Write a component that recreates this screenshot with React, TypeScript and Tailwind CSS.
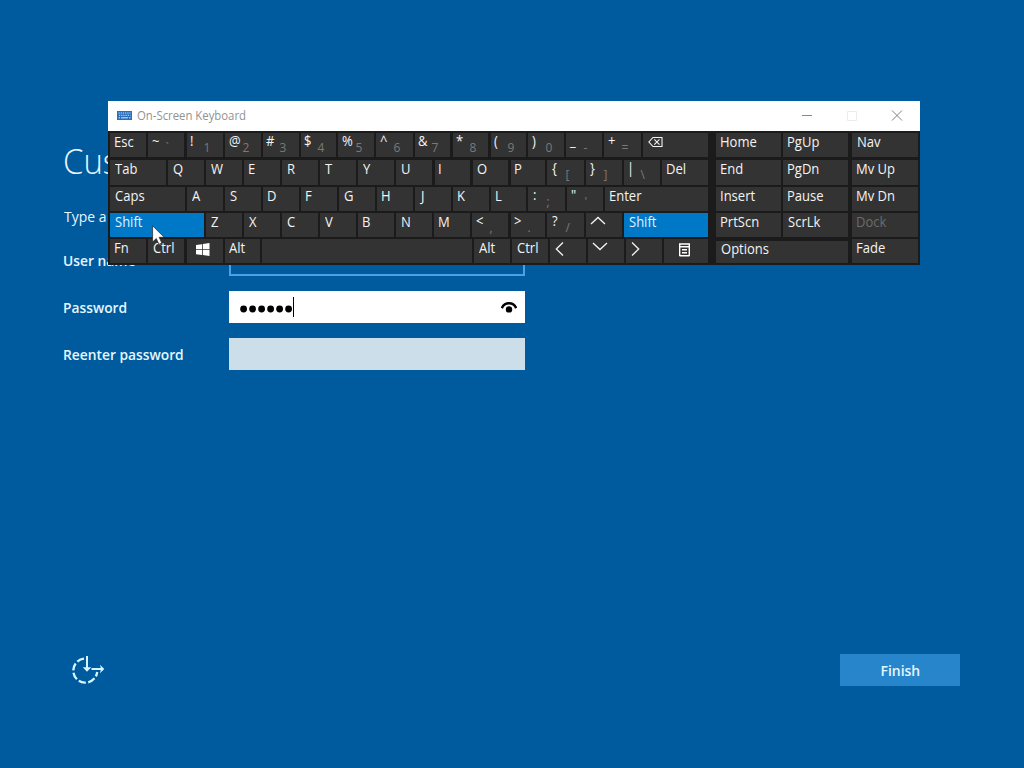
import type { ReactNode } from "react";

type Key = {
  x: number;
  end: number;
  label?: ReactNode;
  sub?: string;
  pad?: number;
  tone?: "on" | "off";
  short?: boolean;
};

const Chevron = ({ d, cls }: { d: string; cls: string }) => (
  <svg className={cls} width="16" height="16" viewBox="0 0 16 16" fill="none" stroke="#f4f4f4" strokeWidth="1.3">
    <path d={d} />
  </svg>
);

const Backspace = () => (
  <svg className="mt-[3px]" width="15" height="12" viewBox="0 0 15 12" fill="none" stroke="#f4f4f4" strokeWidth="1.1">
    <path d="M5 1.5H14V10.5H5L0.9 6Z M6.3 3.4L11.5 8.6M11.5 3.4L6.3 8.6" />
  </svg>
);

const WinLogo = () => (
  <svg className="mt-[4px]" width="14" height="13" viewBox="0 0 14 13" fill="#fff">
    <path d="M0 2L6 1.2V6.2H0Z M6.8 1L13.5 0V6.2H6.8Z M0 7H6V12L0 11.2Z M6.8 7H13.5V13L6.8 12.1Z" />
  </svg>
);

const MenuIcon = () => (
  <svg className="mt-[4px]" width="11" height="14" viewBox="0 0 11 14" fill="none" stroke="#fff">
    <path d="M0 1H11M0 3.7H11M0.7 0.5V13M10.3 0.5V13M0.5 12.7H10.5M3 6.8H8M3 9.8H8" strokeWidth="1.4" />
  </svg>
);

const rows: Key[][] = [
  [
    { x: 110, end: 146, label: "Esc", pad: 4 },
    { x: 148, end: 184, label: "~", sub: "`", pad: 4 },
    { x: 187, end: 223, label: "!", sub: "1", pad: 3 },
    { x: 225, end: 261, label: "@", sub: "2", pad: 4 },
    { x: 263, end: 299, label: "#", sub: "3", pad: 3 },
    { x: 301, end: 336, label: "$", sub: "4", pad: 3 },
    { x: 338, end: 374, label: "%", sub: "5", pad: 4 },
    { x: 376, end: 413, label: "^", sub: "6", pad: 4 },
    { x: 415, end: 450, label: "&", sub: "7", pad: 3 },
    { x: 453, end: 488, label: "*", sub: "8", pad: 3 },
    { x: 491, end: 526, label: "(", sub: "9", pad: 3 },
    { x: 528, end: 564, label: ")", sub: "0", pad: 4 },
    { x: 566, end: 602, label: "_", sub: "-", pad: 4 },
    { x: 604, end: 641, label: "+", sub: "=", pad: 4 },
    { x: 643, end: 708, label: <Backspace />, pad: 5 },
  ],
  [
    { x: 110, end: 166, label: "Tab", pad: 5 },
    { x: 168, end: 204, label: "Q", pad: 5 },
    { x: 206, end: 242, label: "W", pad: 5 },
    { x: 244, end: 280, label: "E", pad: 4 },
    { x: 282, end: 318, label: "R", pad: 5 },
    { x: 320, end: 356, label: "T", pad: 5 },
    { x: 358, end: 394, label: "Y", pad: 5 },
    { x: 396, end: 432, label: "U", pad: 5 },
    { x: 435, end: 470, label: "I", pad: 3 },
    { x: 473, end: 508, label: "O", pad: 4 },
    { x: 511, end: 545, label: "P", pad: 3 },
    { x: 547, end: 584, label: "{", sub: "[", pad: 5 },
    { x: 586, end: 622, label: "}", sub: "]", pad: 4 },
    { x: 624, end: 660, label: "|", sub: "\\", pad: 3 },
    { x: 662, end: 708, label: "Del", pad: 4 },
  ],
  [
    { x: 110, end: 185, label: "Caps", pad: 5 },
    { x: 187, end: 223, label: "A", pad: 5 },
    { x: 225, end: 261, label: "S", pad: 5 },
    { x: 263, end: 299, label: "D", pad: 4 },
    { x: 301, end: 337, label: "F", pad: 4 },
    { x: 339, end: 375, label: "G", pad: 5 },
    { x: 377, end: 413, label: "H", pad: 4 },
    { x: 415, end: 451, label: "J", pad: 6 },
    { x: 453, end: 489, label: "K", pad: 4 },
    { x: 491, end: 526, label: "L", pad: 4 },
    { x: 528, end: 565, label: ":", sub: ";", pad: 5 },
    { x: 567, end: 603, label: '"', sub: "'", pad: 4 },
    { x: 605, end: 708, label: "Enter", pad: 4 },
  ],
  [
    { x: 110, end: 204, label: "Shift", pad: 5, tone: "on" },
    { x: 206, end: 242, label: "Z", pad: 5 },
    { x: 244, end: 280, label: "X", pad: 5 },
    { x: 282, end: 318, label: "C", pad: 5 },
    { x: 320, end: 356, label: "V", pad: 5 },
    { x: 358, end: 394, label: "B", pad: 4 },
    { x: 396, end: 432, label: "N", pad: 5 },
    { x: 434, end: 470, label: "M", pad: 4 },
    { x: 472, end: 508, label: "<", sub: ",", pad: 4 },
    { x: 511, end: 545, label: ">", sub: ".", pad: 3 },
    { x: 547, end: 584, label: "?", sub: "/", pad: 5 },
    { x: 586, end: 622, label: <Chevron cls="" d="M1 11L8 4.5L15 11" />, pad: 4 },
    { x: 624, end: 708, label: "Shift", pad: 5, tone: "on" },
  ],
  [
    { x: 110, end: 146, label: "Fn", pad: 4 },
    { x: 148, end: 184, label: "Ctrl", pad: 5 },
    { x: 187, end: 223, label: <WinLogo />, pad: 9 },
    { x: 225, end: 260, label: "Alt", pad: 4 },
    { x: 262, end: 472 },
    { x: 474, end: 510, label: "Alt", pad: 5 },
    { x: 512, end: 548, label: "Ctrl", pad: 5 },
    { x: 550, end: 586, label: <Chevron cls="mt-[2px]" d="M13 1.5L6.3 8L13 14.5" />, pad: 0 },
    { x: 588, end: 624, label: <Chevron cls="-mt-px" d="M1 5L8 11.5L15 5" />, pad: 4 },
    { x: 626, end: 662, label: <Chevron cls="mt-[2px]" d="M5 1.5L11.7 8L5 14.5" />, pad: 1 },
    { x: 664, end: 708, label: <MenuIcon />, pad: 15 },
  ],
];

const side: Key[][] = [
  [
    { x: 716, end: 781, label: "Home", pad: 4 },
    { x: 783, end: 848, label: "PgUp", pad: 4 },
    { x: 852, end: 918, label: "Nav", pad: 5 },
  ],
  [
    { x: 716, end: 781, label: "End", pad: 4 },
    { x: 783, end: 848, label: "PgDn", pad: 4 },
    { x: 852, end: 918, label: "Mv Up", pad: 4 },
  ],
  [
    { x: 716, end: 781, label: "Insert", pad: 4 },
    { x: 783, end: 848, label: "Pause", pad: 4 },
    { x: 852, end: 918, label: "Mv Dn", pad: 4 },
  ],
  [
    { x: 716, end: 781, label: "PrtScn", pad: 4 },
    { x: 783, end: 848, label: "ScrLk", pad: 5 },
    { x: 852, end: 918, label: "Dock", pad: 4, tone: "off" },
  ],
  [
    { x: 716, end: 848, label: "Options", pad: 5, short: true },
    { x: 852, end: 918, label: "Fade", pad: 4 },
  ],
];

const rowHeights = ["h-6 mb-[3px]", "h-[25px] mb-[2px]", "h-6 mb-[2px]", "h-6 mb-[2px]", "h-6"];

function KeyCap({ k, gap }: { k: Key; gap: number }) {
  const tone =
    k.tone === "on" ? "bg-[#0078c8] text-[#e0f2ff]" : k.tone === "off" ? "bg-[#333] text-[#6c6c6c]" : "bg-[#333] text-[#f4f4f4]";
  return (
    <div
      className={`flex shrink-0 overflow-hidden whitespace-nowrap ${k.short ? "mt-[2px]" : ""} ${tone}`}
      style={{ width: k.end - k.x, marginLeft: gap, paddingLeft: k.pad }}
    >
      <div className={k.sub ? "w-[13.5px] shrink-0" : ""}>
        {typeof k.label === "string" ? (
          <span className={`block w-max origin-left scale-x-[.93] text-[14px] ${k.sub || k.short ? "leading-[16px]" : "leading-[18px]"}`}>{k.label}</span>
        ) : (
          k.label
        )}
      </div>
      {k.sub && <span className="mt-[6px] text-[12px] leading-[17px] text-[#7a7a7a]">{k.sub}</span>}
    </div>
  );
}

function Title() {
  return (
    <div className="flex h-[30px] items-center bg-white pl-[9px]">
      <svg className="-mt-px" width="15" height="9" viewBox="0 0 15 9">
        <path d="M0 0H15V9H0Z" fill="#2a6fbe" />
        <path d="M1.5 2H13.5M2 4.3H13.5" stroke="#d8e8f8" strokeDasharray="1.2 1" />
        <path d="M1.5 6.8H3M4 6.8H11M12 6.8H13.5" stroke="#d8e8f8" />
      </svg>
      <span className="ml-[5px] w-[140px] origin-left scale-x-[.945] text-[12px] text-[#929292]">On-Screen Keyboard</span>
      <svg className="ml-auto mr-[17px]" width="102" height="12" viewBox="0 0 102 12" fill="none">
        <path d="M1 5.5H11" stroke="#888" />
        <path d="M46.5 1.5H55.5V10.5H46.5Z" stroke="#ececec" />
        <path d="M91 0.5L101 10.5M101 0.5L91 10.5" stroke="#808080" />
      </svg>
    </div>
  );
}

function Keyboard() {
  return (
    <div className="absolute left-[108px] top-[101px] h-[164px] w-[812px] bg-[#1b1b1b]">
      <Title />
      <div className="pt-[2px]">
        {rows.map((row, r) => {
          const all = [...row, ...side[r]];
          return (
            <div key={r} className={`flex ${rowHeights[r]}`}>
              {all.map((k, i) => (
                <KeyCap key={i} k={k} gap={k.x - (i ? all[i - 1].end : 108)} />
              ))}
            </div>
          );
        })}
      </div>
    </div>
  );
}

export default function App() {
  return (
    <main className="relative flex h-[768px] w-[1024px] flex-col overflow-hidden bg-[#005a9e] font-['Open_Sans','Noto_Sans',sans-serif] text-[#e4f7ff]">
      <h1 className="ml-[63px] mt-[138px] h-[46px] w-max origin-left scale-x-[.94] text-[35px] font-light leading-[46px]">Customize settings</h1>
      <p className="ml-[64px] mt-[20px] h-6 w-max origin-left scale-x-[.93] text-[15px] leading-6">Type a user name</p>
      <div className="ml-[63px] mt-[16px] grid w-[462px] grid-cols-[166px_296px] items-center gap-y-[15px] text-[15px] font-semibold">
        <label className="w-max origin-left scale-x-[.92]">User name</label>
        <div className="h-8 border-2 border-[#4f9fe4]" />
        <label className="w-max origin-left scale-x-[.92]">Password</label>
        <div className="flex h-8 items-center bg-white pl-[11px] pr-[8px]">
          <svg className="mt-[3px]" width="53" height="8" viewBox="0 0 53 8" fill="#000">
            {[0, 1, 2, 3, 4, 5].map((n) => (
              <circle key={n} cx={3.6 + n * 9} cy="4" r="3.4" />
            ))}
          </svg>
          <div className="h-5 w-px bg-black" />
          <svg className="ml-auto" width="16" height="12" viewBox="0 0 16 12">
            <path d="M0.8 7.2C3.5 0.6 12.5 0.6 15.2 7.2" fill="none" stroke="#000" strokeWidth="2.5" />
            <circle cx="8" cy="8.4" r="3.2" />
          </svg>
        </div>
        <label className="w-max origin-left scale-x-[.92]">Reenter password</label>
        <div className="h-8 bg-[#ccdee9]" />
      </div>
      <footer className="mb-[82px] mt-auto flex items-end justify-between pl-[70px] pr-16">
        <svg width="36" height="32" viewBox="0 0 36 32" fill="none" stroke="#d6f6ff" strokeWidth="2.3">
          <path d="M14 4.7A12 12 0 1 0 27.2 18" strokeDasharray="7.4 2.4" />
          <path d="M17 2V15M21.5 15H32" strokeWidth="2" />
          <path d="M12.8 13.2H21.2L17 17.8Z M30 10.8L34.3 15L30 19.2L31 15Z" fill="#d6f6ff" stroke="none" />
        </svg>
        <button className="h-8 w-[120px] bg-[#2786cb] text-[15px] font-semibold">
          <span className="inline-block scale-x-[.93]">Finish</span>
        </button>
      </footer>
      <Keyboard />
      <svg className="absolute left-[152px] top-[225px]" width="14" height="21" viewBox="0 0 14 21">
        <path d="M0.6 0.8V17L4.3 13.6L6.9 19.3L9.8 18L7.2 12.3H12.2Z" fill="#fff" stroke="#222" strokeWidth=".7" />
      </svg>
    </main>
  );
}
